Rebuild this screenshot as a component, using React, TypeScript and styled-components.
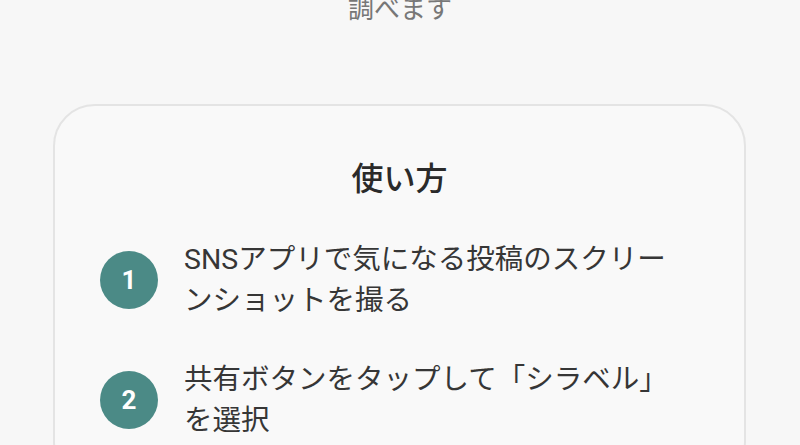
import React from 'react'
import styled, { createGlobalStyle } from 'styled-components'

const GlobalStyle = createGlobalStyle`
	html, body {
		margin: 0;
		padding: 0;
		background: #f7f7f7;
		overflow: hidden;
	}
	body {
		font-family: Roboto, "Noto Sans CJK JP", sans-serif;
		color: #333;
	}
`

const Page = styled.div`
	width: 800px;
	height: 445px;
	display: flex;
	flex-direction: column;
	align-items: center;
	overflow: hidden;
`

// tail of the intro paragraph, scrolled mostly out of view
const Lead = styled.p`
	margin: -11px 0 0;
	font-size: 26px;
	line-height: 40px;
	color: #777;
	text-align: center;
`

const Card = styled.section`
	box-sizing: border-box;
	width: 693px;
	margin: 75px 0 0 -1px;
	padding: 49px 0 40px;
	border: 2px solid #e4e4e4;
	border-radius: 42px;
	background: #f9f9f9;
`

const Title = styled.h2`
	margin: 0 0 36px;
	font-size: 32px;
	line-height: 48px;
	font-weight: 500;
	color: #2a2a2a;
	text-align: center;
`

const Steps = styled.ol`
	list-style: none;
	margin: 0;
	padding: 0 64px 0 45px;
	display: flex;
	flex-direction: column;
	gap: 38px;
`

const Step = styled.li`
	display: flex;
	align-items: center;
	gap: 26px;
`

const Badge = styled.span`
	flex: none;
	width: 58px;
	height: 58px;
	border-radius: 50%;
	background: #4b8a86;
	color: #fff;
	display: flex;
	align-items: center;
	justify-content: center;
	font-size: 26px;
	font-weight: 700;
`

const StepText = styled.p`
	flex: 1;
	margin: 0;
	font-size: 28.5px;
	line-height: 41px;
	color: #363636;
`

const steps = [
	'SNSアプリで気になる投稿のスクリーンショットを撮る',
	'共有ボタンをタップして「シラベル」を選択',
]

export default function App() {
	return (
		<Page>
			<GlobalStyle />
			<Lead>調べます</Lead>
			<Card>
				<Title>使い方</Title>
				<Steps>
					{steps.map((s, i) => (
						<Step key={i}>
							<Badge>{i + 1}</Badge>
							<StepText>{s}</StepText>
						</Step>
					))}
				</Steps>
			</Card>
		</Page>
	)
}
